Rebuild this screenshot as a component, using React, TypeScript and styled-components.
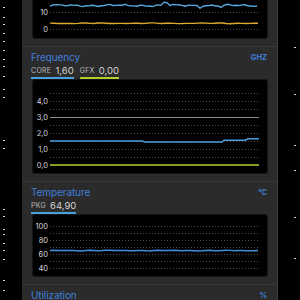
import React from 'react';
import styled, { createGlobalStyle } from 'styled-components';

const GlobalStyle = createGlobalStyle`
  html, body {
    margin: 0;
    padding: 0;
    background: #000;
  }
  body {
    font-family: Inter, "Noto Sans", "Liberation Sans", sans-serif;
  }
`;

const Screen = styled.div`
  display: flex;
  align-items: flex-start;
  width: 300px;
  height: 300px;
  overflow: hidden;
  background: #000;
`;

const Edge = styled.div`
  flex: 1;
  height: 300px;

  svg {
    display: block;
  }
`;

const Panel = styled.div`
  display: flex;
  flex-direction: column;
  flex: none;
  width: 255px;
  background: #2b2b2b;
  border-right: 1px solid #3e3e3e;
`;

const Section = styled.section<{ $first?: boolean }>`
  padding: ${({ $first }) => ($first ? '0' : '4px')} 9px 7px 9px;
  border-top: ${({ $first }) => ($first ? 'none' : '1px solid #393939')};
`;

const Header = styled.div`
  display: flex;
  align-items: center;
  justify-content: space-between;
  height: 12px;
`;

const Title = styled.span`
  font-size: 10px;
  line-height: 12px;
  color: #3f7fdc;
  letter-spacing: -0.1px;
`;

const Unit = styled.span`
  font-size: 7.5px;
  font-weight: 700;
  color: #3f7fdc;
  margin-right: 1px;
`;

const Values = styled.div`
  display: flex;
  gap: 6px;
  height: 16px;
  align-items: stretch;
`;

const ValueItem = styled.div<{ $color: string }>`
  display: flex;
  align-items: center;
  gap: 4px;
  border-bottom: 2px solid ${({ $color }) => $color};
`;

const ValueLabel = styled.span`
  font-size: 7px;
  letter-spacing: 0.3px;
  color: #b9b9b9;
`;

const ValueNumber = styled.span`
  font-size: 9.5px;
  color: #d4d4d4;
`;

const ChartBox = styled.div<{ $h: number; $offset?: number }>`
  margin-left: 1px;
  margin-top: ${({ $offset }) => ($offset ? `${$offset}px` : '0')};
  width: 236px;
  height: ${({ $h }) => $h}px;
  background: #000;
  border-radius: 4px;
  box-shadow: inset 0 0 0 1px #161616;
  overflow: hidden;

  svg {
    display: block;
  }
  text {
    font-family: Inter, "Noto Sans", "Liberation Sans", sans-serif;
    font-size: 7.5px;
    fill: #d6d6d6;
  }
`;

type Series = { points: [number, number][]; color: string; width: number };

interface ChartProps {
  height: number;
  offset?: number;
  grid: number[];
  labels: { y: number; text: string }[];
  series: Series[];
}

const PLOT_L = 18;
const PLOT_R = 227;

const Chart: React.FC<ChartProps> = ({ height, offset, grid, labels, series }) => (
  <ChartBox $h={height} $offset={offset}>
    <svg width="236" height={height}>
      {grid.map((y) => (
        <line
          key={y}
          x1={PLOT_L}
          x2={PLOT_R}
          y1={y + 0.5}
          y2={y + 0.5}
          stroke="#4a4a4a"
          strokeWidth="1"
          strokeDasharray="1 2"
        />
      ))}
      {labels.map((l) => (
        <text key={l.text} x="16" y={l.y + 0.5} textAnchor="end" dominantBaseline="middle">
          {l.text}
        </text>
      ))}
      {series.map((s, i) => (
        <polyline
          key={i}
          points={s.points.map((p) => p.join(',')).join(' ')}
          fill="none"
          stroke={s.color}
          strokeWidth={s.width}
          strokeLinejoin="round"
        />
      ))}
    </svg>
  </ChartBox>
);

// small tick marks seen along the window edges
const Ticks: React.FC<{ x: number; ys: number[] }> = ({ x, ys }) => (
  <svg width="22" height="300">
    {ys.map((y) => (
      <rect key={y} x={x} y={y} width="2" height="1" fill="#d8d8d8" />
    ))}
  </svg>
);

// deterministic wobble for the sampled lines
const wobble = (i: number, seed: number) =>
  Math.sin(i * 0.37 + seed) * 0.6 + Math.sin(i * 1.3 + seed * 2) * 0.4 + Math.sin(i * 0.11 + seed) * 0.5;

const sampled = (base: number, amp: number, seed: number, step = 3): [number, number][] => {
  const pts: [number, number][] = [];
  for (let x = PLOT_L; x <= PLOT_R; x += step) {
    pts.push([x, base + wobble(x, seed) * amp]);
  }
  return pts;
};

const topBlue: [number, number][] = (() => {
  const pts = sampled(26.5, 0.9, 1.7, 3);
  // a few spikes like the live sample
  return pts.map(([x, y]) => {
    if (x === 132 || x === 135) return [x, y - 3];
    if (x === 189) return [x, y + 2];
    if (x === 168) return [x, y + 1.5];
    return [x, y];
  });
})();

const freqY = (v: number) => 86 - 16 * v;
const tempY = (v: number) => 54 - 0.7 * (v - 40);

const App: React.FC = () => {
  return (
    <Screen>
      <GlobalStyle />
      <Edge>
        <Ticks
          x={3}
          ys={[7, 17, 24, 33, 41, 50, 59, 66, 76, 89, 97, 140, 148, 209, 216, 229, 234, 243, 250, 259, 280, 290]}
        />
      </Edge>
      <Panel>
        <Section $first>
          <Chart
            height={60}
            offset={-21}
            grid={[16, 33, 50]}
            labels={[
              { y: 33, text: '10' },
              { y: 50, text: '0' },
            ]}
            series={[
              { points: topBlue, color: '#58a9e2', width: 1.4 },
              { points: sampled(44.3, 0.35, 4.2, 4), color: '#dcaa2c', width: 1.4 },
            ]}
          />
        </Section>

        <Section>
          <Header>
            <Title>Frequency</Title>
            <Unit>GHZ</Unit>
          </Header>
          <Values>
            <ValueItem $color="#4a9fdc">
              <ValueLabel>CORE</ValueLabel>
              <ValueNumber>1,60</ValueNumber>
            </ValueItem>
            <ValueItem $color="#b5cc2e">
              <ValueLabel>GFX</ValueLabel>
              <ValueNumber>0,00</ValueNumber>
            </ValueItem>
          </Values>
          <Chart
            height={95}
            grid={[14, 22, 30, 38, 46, 54, 62, 70, 78, 86]}
            labels={[
              { y: freqY(4), text: '4,0' },
              { y: freqY(3), text: '3,0' },
              { y: freqY(2), text: '2,0' },
              { y: freqY(1), text: '1,0' },
              { y: freqY(0), text: '0,0' },
            ]}
            series={[
              {
                points: [
                  [PLOT_L, freqY(3) + 0.5],
                  [PLOT_R, freqY(3) + 0.5],
                ],
                color: '#8c8c8c',
                width: 1.2,
              },
              {
                points: [
                  [PLOT_L, 62],
                  [110, 62],
                  [113, 63],
                  [190, 63],
                  [192, 61.2],
                  [213, 61.2],
                  [216, 59.8],
                  [PLOT_R, 59.8],
                ],
                color: '#4a9fdc',
                width: 1.5,
              },
              {
                points: [
                  [PLOT_L, freqY(0)],
                  [PLOT_R, freqY(0)],
                ],
                color: '#b5cc2e',
                width: 1.5,
              },
            ]}
          />
        </Section>

        <Section>
          <Header>
            <Title>Temperature</Title>
            <Unit>°C</Unit>
          </Header>
          <Values>
            <ValueItem $color="#4a9fdc">
              <ValueLabel>PKG</ValueLabel>
              <ValueNumber>64,90</ValueNumber>
            </ValueItem>
          </Values>
          <Chart
            height={63}
            grid={[12, 19, 26, 33, 40, 47, 54]}
            labels={[
              { y: tempY(100), text: '100' },
              { y: tempY(80), text: '80' },
              { y: tempY(60), text: '60' },
              { y: tempY(40), text: '40' },
            ]}
            series={[{ points: sampled(tempY(64.9), 0.3, 2.4, 4), color: '#3f8fda', width: 1.5 }]}
          />
        </Section>

        <Section>
          <Header>
            <Title>Utilization</Title>
            <Unit>%</Unit>
          </Header>
        </Section>
      </Panel>
      <Edge>
        <Ticks x={16} ys={[47, 94, 145, 170, 217, 258]} />
      </Edge>
    </Screen>
  );
};

export default App;
